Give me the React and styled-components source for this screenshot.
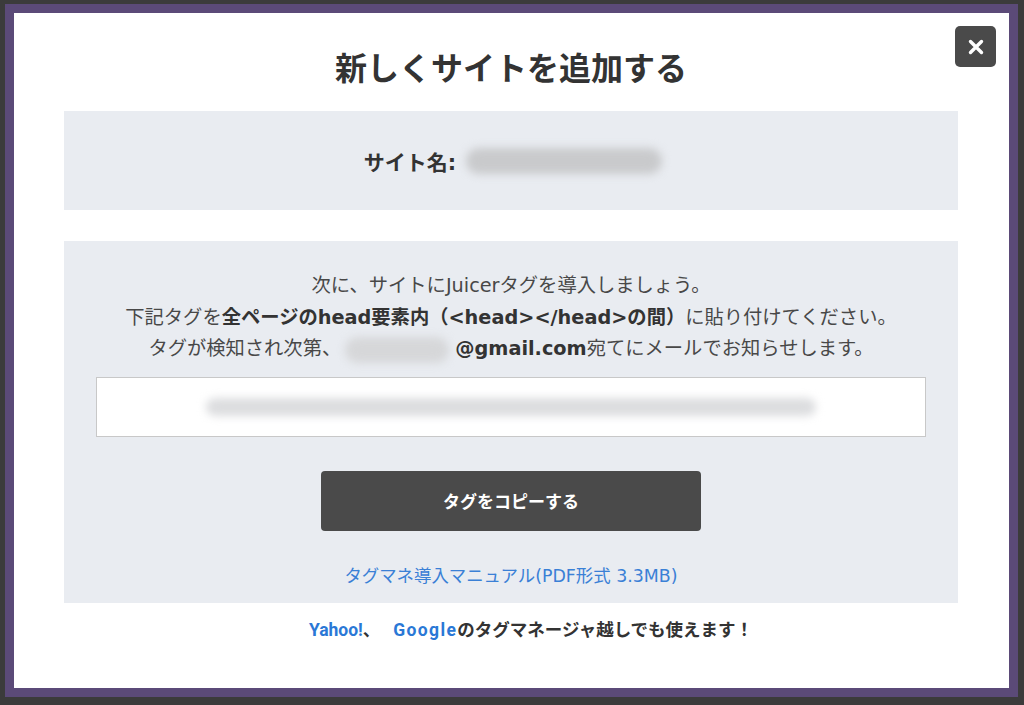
import React from "react";
import styled, { createGlobalStyle } from "styled-components";

const GlobalStyle = createGlobalStyle`
  html, body {
    margin: 0;
    padding: 0;
    background: #3b3b3b;
  }
  body {
    font-family: "Liberation Sans", "Noto Sans CJK JP", sans-serif;
    color: #333;
  }
`;

const App = () => {
  return (
    <>
      <GlobalStyle />
      <Page>
        <Modal>
          <CloseButton aria-label="close">
            <svg width="18" height="18" viewBox="0 0 18 18">
              <path
                d="M3.5 3.5 L14.5 14.5 M14.5 3.5 L3.5 14.5"
                stroke="#fff"
                strokeWidth="3.4"
                strokeLinecap="round"
              />
            </svg>
          </CloseButton>

          <Title>新しくサイトを追加する</Title>

          <NamePanel>
            <NameLabel>サイト名:</NameLabel>
            <Redacted $w={196} $h={26} $tone="#c9cacc" />
          </NamePanel>

          <TagPanel>
            <Lead>
              <p>次に、サイトにJuicerタグを導入しましょう。</p>
              <p>
                下記タグを<b>全ページのhead要素内（&lt;head&gt;&lt;/head&gt;の間）</b>
                に貼り付けてください。
              </p>
              <p>
                タグが検知され次第、
                <Redacted $w={104} $h={26} $tone="#d6d7d9" $inline />
                <b>@gmail.com</b>宛てにメールでお知らせします。
              </p>
            </Lead>

            <TagBox>
              <Redacted $w={610} $h={18} $tone="#dcdddf" />
            </TagBox>

            <CopyButton>タグをコピーする</CopyButton>

            <ManualLink href="#">タグマネ導入マニュアル(PDF形式 3.3MB)</ManualLink>
          </TagPanel>

          <Footnote>
            <Blue>Yahoo!</Blue>、 <Blue $gap>Google</Blue>のタグマネージャ越しでも使えます！
          </Footnote>
        </Modal>
      </Page>
    </>
  );
};

export default App;

const Page = styled.div`
  padding: 4px 6px 8px 5px;
  height: 705px;
  box-sizing: border-box;
  display: flex;
`;

const Modal = styled.div`
  position: relative;
  flex: 1;
  background: #fff;
  border: 9px solid #5b4a78;
  padding: 0 51px 0 50px;
  display: flex;
  flex-direction: column;
  align-items: stretch;
`;

const CloseButton = styled.button`
  position: absolute;
  top: 13px;
  right: 13px;
  width: 41px;
  height: 41px;
  border: none;
  border-radius: 5px;
  background: #4a4a4a;
  display: flex;
  align-items: center;
  justify-content: center;
  padding: 0;
  cursor: pointer;
`;

const Title = styled.h1`
  margin: 36px 0 22px;
  font-size: 32px;
  line-height: 40px;
  font-weight: bold;
  color: #333;
  text-align: center;
`;

const NamePanel = styled.div`
  height: 99px;
  background: #e9ecf1;
  display: flex;
  align-items: center;
  justify-content: center;
  gap: 10px;
  padding-left: 4px;
`;

const NameLabel = styled.span`
  font-family: "DejaVu Sans", "Noto Sans CJK JP", sans-serif;
  font-size: 21px;
  font-weight: bold;
  color: #333;
`;

const Redacted = styled.span`
  display: ${(p) => (p.$inline ? "inline-block" : "block")};
  vertical-align: middle;
  width: ${(p) => p.$w}px;
  height: ${(p) => p.$h}px;
  border-radius: ${(p) => p.$h / 2}px;
  background: ${(p) => p.$tone};
  filter: blur(4px);
  margin: ${(p) => (p.$inline ? "0 6px 0 4px" : "0")};
`;

const TagPanel = styled.div`
  margin-top: 31px;
  height: 362px;
  box-sizing: border-box;
  background: #e9ecf1;
  padding: 29px 32px 0;
  display: flex;
  flex-direction: column;
  align-items: center;
`;

const Lead = styled.div`
  text-align: center;
  font-family: "DejaVu Sans", "Noto Sans CJK JP", sans-serif;
  font-size: 19.3px;
  line-height: 31.5px;
  color: #484848;

  p {
    margin: 0;
    white-space: nowrap;
  }

  b {
    color: #333;
  }
`;

const TagBox = styled.div`
  align-self: stretch;
  margin-top: 12px;
  height: 60px;
  box-sizing: border-box;
  background: #fff;
  border: 1px solid #c8c8c8;
  display: flex;
  align-items: center;
  justify-content: center;
`;

const CopyButton = styled.button`
  margin-top: 34px;
  width: 380px;
  height: 60px;
  border: none;
  border-radius: 4px;
  background: #4a4a4a;
  color: #fff;
  font-family: inherit;
  font-size: 17px;
  font-weight: bold;
  cursor: pointer;
`;

const ManualLink = styled.a`
  margin-top: 33px;
  font-family: "DejaVu Sans", "Noto Sans CJK JP", sans-serif;
  font-size: 17.4px;
  line-height: 24px;
  color: #3a80d6;
  text-decoration: none;
`;

const Footnote = styled.p`
  margin: 14px 0 0;
  padding-left: 40px;
  text-align: center;
  font-size: 17.5px;
  line-height: 26px;
  font-weight: bold;
  color: #333;
`;

const Blue = styled.span`
  font-family: Roboto, sans-serif;
  color: #2a78d6;
  margin-left: ${(p) => (p.$gap ? "8px" : "0")};
  letter-spacing: ${(p) => (p.$gap ? "1.4px" : "0")};
`;
